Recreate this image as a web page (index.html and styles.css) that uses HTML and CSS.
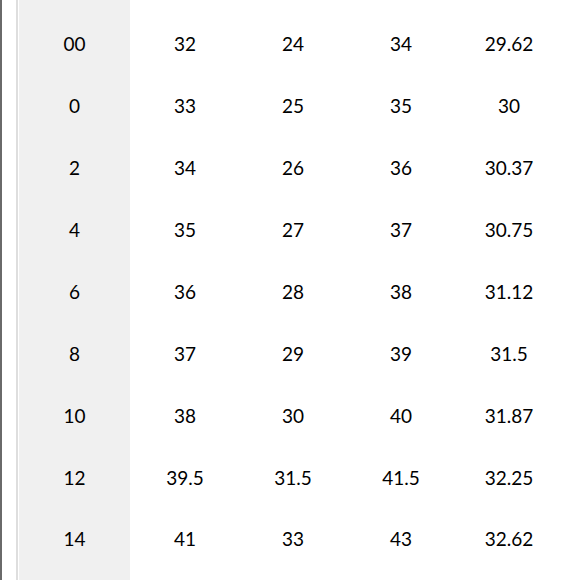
FILE: index.html
```html
<!DOCTYPE html>
<html>
<head>
<meta charset="utf-8">
<link rel="stylesheet" href="styles.css">
</head>
<body>
<div class="frame">
  <div class="inner">
    <div class="table">
      <div class="col first">
        <div class="cell">00</div><div class="cell">0</div><div class="cell">2</div><div class="cell">4</div><div class="cell">6</div><div class="cell">8</div><div class="cell">10</div><div class="cell">12</div><div class="cell">14</div>
      </div>
      <div class="col">
        <div class="cell">32</div><div class="cell">33</div><div class="cell">34</div><div class="cell">35</div><div class="cell">36</div><div class="cell">37</div><div class="cell">38</div><div class="cell">39.5</div><div class="cell">41</div>
      </div>
      <div class="col">
        <div class="cell">24</div><div class="cell">25</div><div class="cell">26</div><div class="cell">27</div><div class="cell">28</div><div class="cell">29</div><div class="cell">30</div><div class="cell">31.5</div><div class="cell">33</div>
      </div>
      <div class="col">
        <div class="cell">34</div><div class="cell">35</div><div class="cell">36</div><div class="cell">37</div><div class="cell">38</div><div class="cell">39</div><div class="cell">40</div><div class="cell">41.5</div><div class="cell">43</div>
      </div>
      <div class="col">
        <div class="cell">29.62</div><div class="cell">30</div><div class="cell">30.37</div><div class="cell">30.75</div><div class="cell">31.12</div><div class="cell">31.5</div><div class="cell">31.87</div><div class="cell">32.25</div><div class="cell">32.62</div>
      </div>
    </div>
  </div>
</div>
</body>
</html>
```
FILE: styles.css
```css
html, body {
  margin: 0;
  padding: 0;
  background: #fff;
  height: 580px;
  overflow: hidden;
}
.frame {
  height: 580px;
  border-left: 2px solid #6a6a6a;
  padding-left: 14px;
}
.inner {
  height: 580px;
  border-left: 2px solid #dedede;
  padding-left: 1px;
}
.table {
  display: flex;
  height: 580px;
}
.col {
  width: 108px;
  padding-top: 13px;
  display: flex;
  flex-direction: column;
  font-family: Lato, "Noto Sans", sans-serif;
  font-size: 19px;
  color: #000;
}
.col.first {
  width: 111px;
  background: #f0f0f0;
}
.col + .col .cell {
  padding-left: 2px;
}
.cell {
  height: 61.875px;
  flex: none;
  display: flex;
  align-items: center;
  justify-content: center;
}
```
